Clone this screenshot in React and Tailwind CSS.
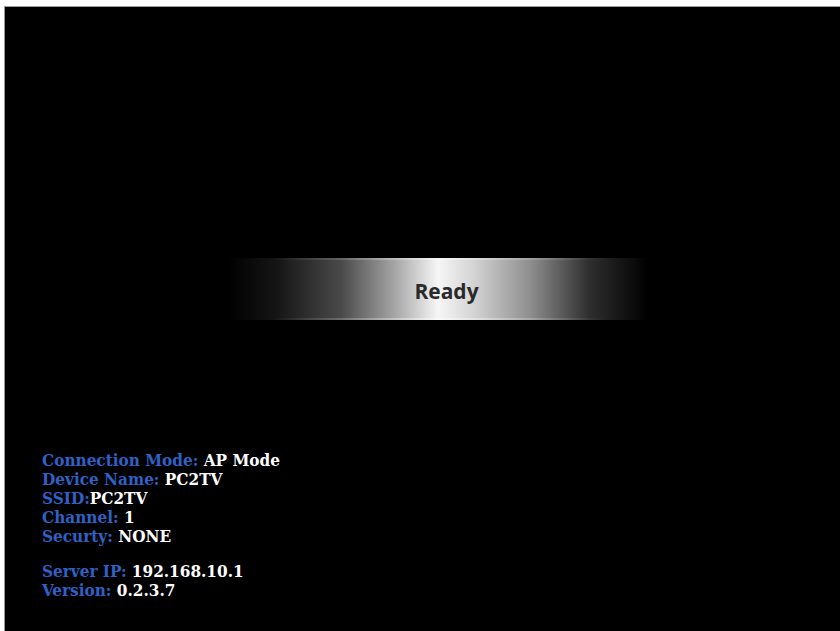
import React from "react";

const info = [
  { label: "Connection Mode:", value: " AP Mode" },
  { label: "Device Name:", value: " PC2TV" },
  { label: "SSID:", value: "PC2TV" },
  { label: "Channel:", value: " 1" },
  { label: "Securty:", value: " NONE" },
];

const server = [
  { label: "Server IP:", value: " 192.168.10.1" },
  { label: "Version:", value: " 0.2.3.7" },
];

function InfoLine({ label, value }) {
  return (
    <p className="leading-[19px] whitespace-pre">
      <span className="text-[#2f61c6]">{label}</span>
      <span className="text-white">{value}</span>
    </p>
  );
}

export default function App() {
  return (
    <div className="w-full h-screen bg-white pt-[6px] pl-[4px] overflow-hidden">
      <div className="w-full h-full bg-black border-t border-l border-[#9a9a9a] flex flex-col">
        <div className="mt-[251px] flex justify-center pl-[30px]">
          <div
            className="relative w-[420px] h-[62px] flex items-center justify-center bg-[linear-gradient(90deg,#000_0%,#161616_12%,#4a4a4a_27%,#a8a8a8_40%,#f6f6f6_50%,#d6d6d6_58%,#8e8e8e_72%,#2e2e2e_86%,#000_100%)]"
          >
            <div className="absolute inset-x-0 top-0 h-[2px] bg-[linear-gradient(90deg,transparent_10%,rgba(255,255,255,0.35)_50%,transparent_90%)]" />
            <div className="absolute inset-x-0 bottom-0 h-[2px] bg-[linear-gradient(90deg,transparent_10%,rgba(255,255,255,0.45)_50%,transparent_90%)]" />
            <span className="relative text-[#2a2a2a] text-[21px] font-bold font-['Open_Sans',sans-serif] ml-[18px] mt-[5px]">
              Ready
            </span>
          </div>
        </div>

        <div className="mt-[131px] ml-[37px] font-['DejaVu_Serif_Condensed','DejaVu_Serif',serif] font-bold text-[17px]">
          {info.map((row) => (
            <InfoLine key={row.label} {...row} />
          ))}
          <div className="h-[16px]" />
          {server.map((row) => (
            <InfoLine key={row.label} {...row} />
          ))}
        </div>
      </div>
    </div>
  );
}
